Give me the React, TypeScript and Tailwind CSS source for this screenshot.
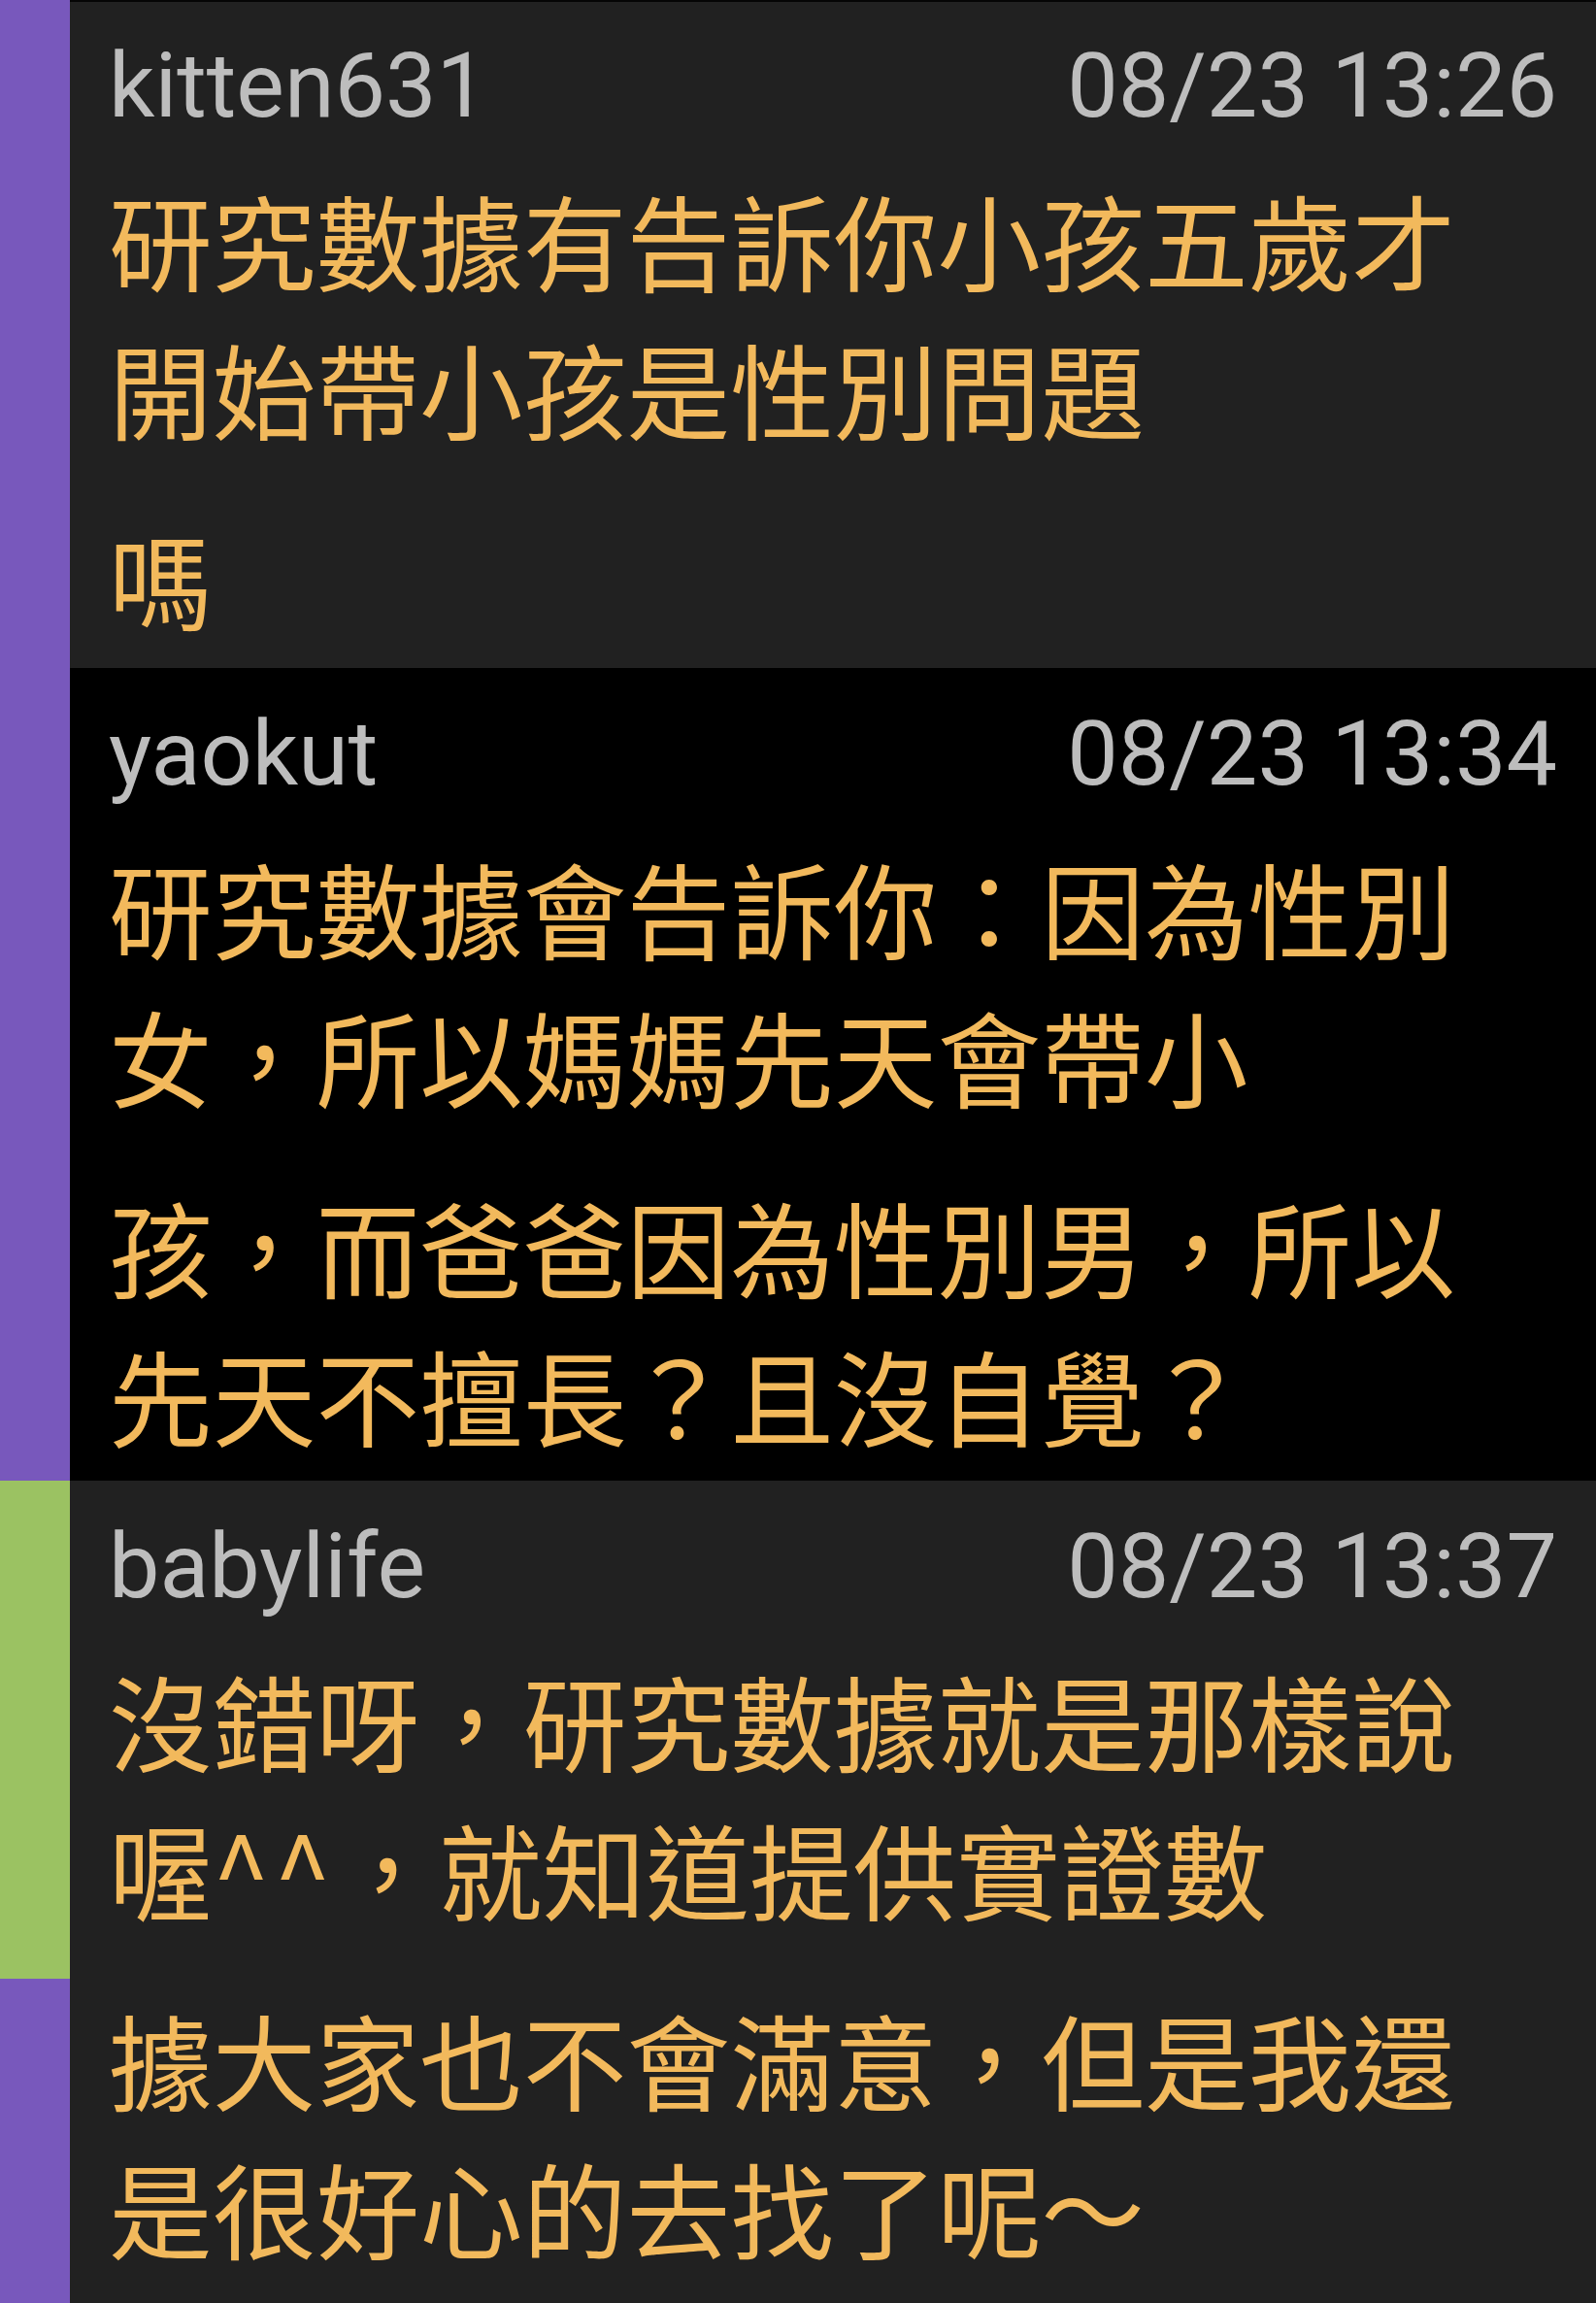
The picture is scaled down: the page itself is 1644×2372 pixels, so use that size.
import React from "react";

type Post = {
  user: string;
  time: string;
  groups: React.ReactNode[][];
  bg: string;
  height: string;
  bar: "purple" | "split";
};

const posts: Post[] = [
  {
    user: "kitten631",
    time: "08/23 13:26",
    groups: [["研究數據有告訴你小孩五歲才", "開始帶小孩是性別問題"], ["嗎"]],
    bg: "bg-[#212121]",
    height: "h-[688px]",
    bar: "purple",
  },
  {
    user: "yaokut",
    time: "08/23 13:34",
    groups: [
      ["研究數據會告訴你：因為性別", "女，所以媽媽先天會帶小"],
      ["孩，而爸爸因為性別男，所以", "先天不擅長？且沒自覺？"],
    ],
    bg: "bg-black",
    height: "h-[837px]",
    bar: "purple",
  },
  {
    user: "babylife",
    time: "08/23 13:37",
    groups: [
      [
        "沒錯呀，研究數據就是那樣說",
        <>
          喔<span className="tracking-[4px]">^^</span>，就知道提供實證數
        </>,
      ],
      ["據大家也不會滿意，但是我還", "是很好心的去找了呢～"],
    ],
    bg: "bg-[#212121]",
    height: "flex-1",
    bar: "split",
  },
];

const PostRow = ({ post, first }: { post: Post; first: boolean }) => {
  return (
    <div className={`flex ${post.height}`}>
      {post.bar === "purple" ? (
        <div className="w-[72px] shrink-0 bg-[#7858bc]" />
      ) : (
        <div className="w-[72px] shrink-0 flex flex-col">
          <div className="h-[513px] bg-[#9bc262]" />
          <div className="flex-1 bg-[#7858bc]" />
        </div>
      )}
      <div
        className={`flex-1 px-[40px] ${post.bg} ${
          first ? "border-t-2 border-[#050505] pt-[31px]" : "pt-[33px]"
        }`}
      >
        <div
          className="flex justify-between text-[93.5px] leading-[111px] text-[#bdbdbd]"
          style={{ fontFamily: "Roboto, 'Noto Sans', sans-serif" }}
        >
          <span>{post.user}</span>
          <span>{post.time}</span>
        </div>
        <div
          className="mt-[25px] flex flex-col gap-[43px] text-[106.7px] leading-[153px] text-[#f2b95c]"
          style={{ fontFamily: "'Noto Sans CJK TC', 'Noto Sans CJK SC', sans-serif" }}
        >
          {post.groups.map((lines, i) => (
            <div key={i}>
              {lines.map((line, j) => (
                <div key={j} className="whitespace-nowrap">
                  {line}
                </div>
              ))}
            </div>
          ))}
        </div>
      </div>
    </div>
  );
};

const App = () => {
  return (
    <div className="w-[1644px] h-[2372px] flex flex-col overflow-hidden bg-[#212121]">
      {posts.map((p, i) => (
        <PostRow key={p.user} post={p} first={i === 0} />
      ))}
    </div>
  );
};

export default App;
